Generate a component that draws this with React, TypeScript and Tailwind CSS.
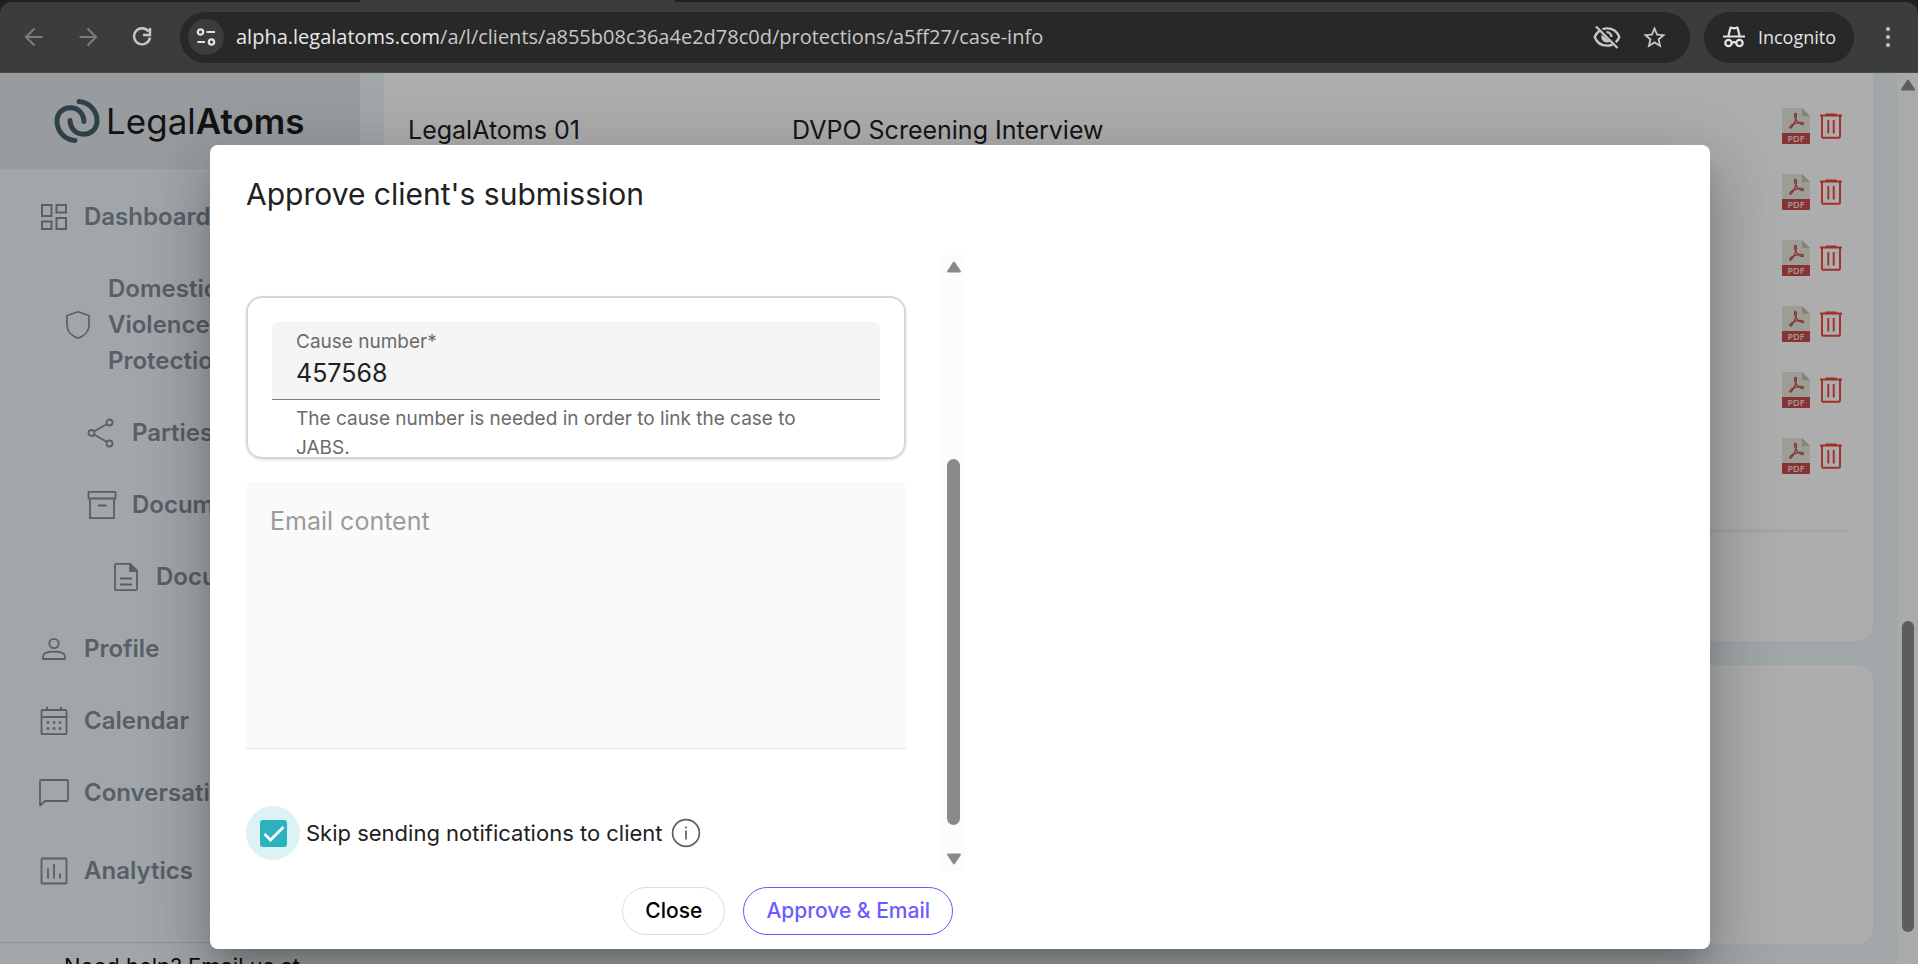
import React from "react";

type IconProps = { className?: string };

const DashboardIcon = () => (
  <svg viewBox="0 0 30 30" className="size-[30px]" fill="none" stroke="currentColor" strokeWidth="2">
    <path d="M3 3h9.500v11H3zM17.500 3H27v7.500h-9.500zM3 19.500h9.500V27H3zM17.500 16H27v11h-9.500z" />
  </svg>
);
const ShieldIcon = () => (
  <svg viewBox="0 0 30 30" className="size-[30px]" fill="none" stroke="currentColor" strokeWidth="1.700">
    <path d="M15 1.800 26 5.500v9.500c0 6-4.500 11-11 13.300C8.500 26 4 21 4 15V5.500z" />
  </svg>
);
const ShareIcon = () => (
  <svg viewBox="0 0 30 30" className="size-[30px]" fill="none" stroke="currentColor" strokeWidth="1.800">
    <circle cx="4.500" cy="15" r="3" />
    <circle cx="22.500" cy="4.500" r="3" />
    <circle cx="22.500" cy="25.500" r="3" />
    <path d="m7 13.500 13-7.500M7 16.500 20 24" />
  </svg>
);
const ArchiveIcon = () => (
  <svg viewBox="0 0 30 30" className="size-[30px]" fill="none" stroke="currentColor" strokeWidth="1.800" strokeLinejoin="round">
    <path d="M1.500 1.800h27v6.700h-27zM3 8.500h24v19.700H3zM11 15.500h8.500" />
  </svg>
);
const FileIcon = () => (
  <svg viewBox="0 0 30 30" className="size-[30px]" fill="none" stroke="currentColor" strokeWidth="1.800" strokeLinejoin="round">
    <path d="M4 3a1.200 1.200 0 0 1 1.200-1.200H19L26 9v18a1.200 1.200 0 0 1-1.200 1.200H5.200A1.200 1.200 0 0 1 4 27zM9 16.500h12M9 22.500h12" />
    <path d="M19 1.800V9h7z" fill="currentColor" />
  </svg>
);
const ProfileIcon = () => (
  <svg viewBox="0 0 30 30" className="size-[30px]" fill="none" stroke="currentColor" strokeWidth="1.800">
    <circle cx="15" cy="9.500" r="4.700" />
    <path d="M4 25v-2.500c0-3 4.500-4.800 11-4.800s11 1.800 11 4.800V25z" strokeLinejoin="round" />
  </svg>
);
const CalendarIcon = () => (
  <svg viewBox="0 0 30 30" className="size-[30px]" fill="none" stroke="currentColor" strokeWidth="1.800">
    <rect x="2.500" y="4" width="25" height="24.200" rx="1" />
    <path d="M2.500 11h25M8 4V.8M22 4V.8" />
    <path d="M7.700 16.500h2.600M13.700 16.500h2.600M19.700 16.500h2.600M7.700 22.500h2.600M13.700 22.500h2.600M19.700 22.500h2.600" strokeWidth="2.600" />
  </svg>
);
const ChatIcon = () => (
  <svg viewBox="0 0 30 30" className="size-[30px]" fill="none" stroke="currentColor" strokeWidth="1.800" strokeLinejoin="round">
    <path d="M1 27.500V3.200A1.200 1.200 0 0 1 2.200 2h25.600A1.200 1.200 0 0 1 29 3.200v18.600a1.200 1.200 0 0 1-1.200 1.200H6z" />
  </svg>
);
const ChartIcon = () => (
  <svg viewBox="0 0 30 30" className="size-[30px]" fill="none" stroke="currentColor" strokeWidth="1.800">
    <rect x="2.500" y="2.500" width="25" height="25" rx="1" />
    <path d="M9 12.500V22.500M15 8v14.500M21 17.500v5" />
  </svg>
);

const LogoMark = () => (
  <svg viewBox="0 0 46 44" className="h-11 w-[46px]" fill="none" stroke="#45606b" strokeWidth="5" strokeLinecap="round">
    <path d="M25 2.600C36 3.500 43 12 43 22c0 8-6 13.200-13.500 13.200S16.500 30 16 21.500" />
    <path d="M21 41.400C10 40.500 3 32 3 22 3 14 9 8.800 16.500 8.800S29.500 14 30 22.500" />
  </svg>
);

const PdfIcon = () => (
  <svg viewBox="0 0 28 36" className="h-9 w-7" role="img" aria-label="PDF">
    <path d="M1 0h19l8 8v18H0V1a1 1 0 0 1 1-1z" fill="#e6e7dc" />
    <path d="M20 0l8 8h-8z" fill="#c3c3b4" />
    <path d="M0 25h28v10a1 1 0 0 1-1 1H1a1 1 0 0 1-1-1z" fill="#c84a4c" />
    <path d="M13.500 5.500c-1.400 0-1 3.200 0 5 1.200 2.500 3.500 5 6 5.800 2.400.6 2.600-1.300.5-1.700-2.600-.4-6 .4-8.500 1.500-2 .9-3.800 2.700-3.500 3.700.5 1.200 2.300-.8 3.500-3.300 1.200-2.400 2.700-6.200 2.900-8.500.1-1.600-.3-2.500-.9-2.500z" fill="none" stroke="#c84a4c" strokeWidth="1.300" />
    <text x="14" y="33.500" textAnchor="middle" fontFamily="Open Sans, sans-serif" fontSize="9" fontWeight="600" fill="#f2e3e3">PDF</text>
  </svg>
);

const TrashIcon = () => (
  <svg viewBox="0 0 24 28" className="h-7 w-6" fill="none" stroke="#f04438" strokeWidth="1.900">
    <path d="M1 3.500h22M6.500 2.500h11M3 3.500v20.700c0 1 .6 1.600 1.600 1.600h14.800c1 0 1.600-.6 1.600-1.600V3.500M9.300 8v13.500M14.700 8v13.500" />
  </svg>
);

const IncognitoIcon = () => (
  <svg viewBox="0 0 24 22" className="h-[22px] w-6" fill="none" stroke="#e3e3e3" strokeWidth="2.200">
    <path d="M6.500 9.500 8.300 2.200c.1-.6.6-.8 1.100-.6l2.600.8 2.600-.8c.5-.2 1 0 1.100.6l1.800 7.300M1 10.500h22" />
    <circle cx="6.500" cy="17" r="3.200" />
    <circle cx="17.500" cy="17" r="3.200" />
    <path d="M9.700 17c1.200-1 3.400-1 4.600 0" />
  </svg>
);

const EyeOffIcon = () => (
  <svg viewBox="0 0 28 24" className="h-6 w-7" fill="none" stroke="#c7c7c7" strokeWidth="2.300">
    <path d="M9.500 4.200A13 13 0 0 1 14 3.300c5.700 0 10.300 3.500 12.300 8.700a13 13 0 0 1-3.600 5.200M6.500 5.700A14 14 0 0 0 1.700 12c2 5.200 6.600 8.700 12.300 8.700 2 0 3.800-.4 5.400-1.100M3 1.500l21.500 21.500" />
    <path d="M8.700 9.800c-1.500 3.900 1.300 7.700 5.300 7.700 1.400 0 2.300-.4 3.200-.9z" fill="#c7c7c7" stroke="none" />
    <path d="M13.500 7.200a4.800 4.800 0 0 1 5 4.800" />
  </svg>
);

const StarIcon = () => (
  <svg viewBox="0 0 24 24" className="size-[27px]" fill="#c7c7c7">
    <path d="m22 9.240-7.190-.62L12 2 9.190 8.630 2 9.240l5.460 4.730L5.820 21 12 17.270 18.180 21l-1.630-7.030zM12 15.400l-3.760 2.270 1-4.280-3.320-2.880 4.380-.38L12 6.100l1.710 4.040 4.380.38-3.320 2.880 1 4.280z" />
  </svg>
);

const TuneIcon = () => (
  <svg viewBox="0 0 20 18" className="h-[18px] w-5" fill="none" stroke="#e3e3e3" strokeWidth="2.200">
    <circle cx="4.500" cy="4" r="2.700" />
    <path d="M10.500 4H19M1.500 14H9" />
    <circle cx="15.500" cy="14" r="2.700" />
  </svg>
);

const Arrow = ({ className = "" }: IconProps) => (
  <svg viewBox="0 0 20 20" className={`size-5 ${className}`} fill="none" stroke="#7b7b7b" strokeWidth="2.200">
    <path d="M18.500 10H2.500M10.500 1.500 2 10l8.500 8.500" />
  </svg>
);

const ReloadIcon = () => (
  <svg viewBox="0 0 20 20" className="size-5" fill="none" stroke="#c7c7c7" strokeWidth="2.400">
    <path d="M16.500 4.500A8 8 0 1 0 18 10.500M18 1v7h-7" />
  </svg>
);

const Triangle = ({ className = "" }: IconProps) => (
  <svg viewBox="0 0 16 12" className={`h-3 w-4 shrink-0 ${className}`} fill="#8a8a8a" stroke="#8a8a8a" strokeWidth="2" strokeLinejoin="round">
    <path d="M8 1.500 14 10.500H2z" />
  </svg>
);

const BrowserBar = () => (
  <header className="shrink-0 border-b border-[#4a4a48] bg-[#1f2020] font-['Open_Sans',sans-serif]">
    <div className="ml-[360px] h-[2px] w-[315px] bg-[#3c3c3c]" />
    <div className="flex h-[70px] items-center rounded-t-xl bg-[#3c3c3c] pr-6">
      <div className="flex w-[180px] items-center gap-[34px] pl-6">
        <button aria-label="Back"><Arrow /></button>
        <button aria-label="Forward"><Arrow className="rotate-180" /></button>
        <button aria-label="Reload"><ReloadIcon /></button>
      </div>
      <div className="flex h-[51px] min-w-0 flex-1 items-center rounded-full bg-[#282828] pr-[22px] pl-2">
        <button aria-label="View site information" className="flex size-9 shrink-0 items-center justify-center rounded-full bg-[#3c3c3c]">
          <TuneIcon />
        </button>
        <p className="min-w-0 flex-1 truncate pl-3 text-xl leading-8 text-[#c7c7c7]">
          <span className="text-[#e8e8e8]">alpha.legalatoms.com</span>/a/l/clients/a855b08c36a4e2d78c0d/protections/a5ff27/case-info
        </p>
        <div className="flex items-center gap-5">
          <button aria-label="Third-party cookies blocked"><EyeOffIcon /></button>
          <button aria-label="Bookmark this tab"><StarIcon /></button>
        </div>
      </div>
      <button className="ml-3.5 flex h-[51px] items-center gap-3 rounded-full bg-[#282828] px-[18px] text-[18px] text-[#e3e3e3]">
        <IncognitoIcon />
        Incognito
      </button>
      <button aria-label="Menu" className="ml-7 flex w-3 flex-col items-center gap-1">
        <span className="size-1 rounded-full bg-[#c7c7c7]" />
        <span className="size-1 rounded-full bg-[#c7c7c7]" />
        <span className="size-1 rounded-full bg-[#c7c7c7]" />
      </button>
    </div>
  </header>
);

const navItems = [
  { label: "Dashboard", Icon: DashboardIcon, cls: "h-[72px] pl-[39px]" },
  { label: "Domestic Violence Protection", Icon: ShieldIcon, cls: "h-36 pl-[63px]" },
  { label: "Parties", Icon: ShareIcon, cls: "h-[72px] pl-[87px]" },
  { label: "Documents", Icon: ArchiveIcon, cls: "h-[72px] pl-[87px]" },
  { label: "Documents", Icon: FileIcon, cls: "h-[72px] pl-[111px]" },
  { label: "Profile", Icon: ProfileIcon, cls: "h-[72px] pl-[39px]" },
  { label: "Calendar", Icon: CalendarIcon, cls: "h-[72px] pl-[39px]" },
  { label: "Conversations", Icon: ChatIcon, cls: "h-[72px] pl-[39px]" },
  { label: "Analytics", Icon: ChartIcon, cls: "h-[84px] pl-[39px]" },
];

const Sidebar = () => (
  <aside className="flex w-[360px] shrink-0 flex-col">
    <div className="flex h-24 shrink-0 items-center gap-1.5 bg-[#e0e6ea] pl-[54px]">
      <LogoMark />
      <span className="text-[35px] leading-10 text-[#1c1c1c]">
        Legal<span className="font-semibold">Atoms</span>
      </span>
    </div>
    <nav className="flex shrink-0 flex-col pt-3 pb-[29px]">
      {navItems.map(({ label, Icon, cls }, i) => (
        <a key={i} href="#" className={`flex items-center gap-[15px] text-2xl leading-9 font-semibold text-[#828c9a] ${cls}`}>
          <Icon />
          <span className="w-36">{label}</span>
        </a>
      ))}
    </nav>
    <div className="border-t border-[#d3d8dc] pt-[7px] pl-16 text-[22px] leading-8 text-[#111]">Need help? Email us at</div>
  </aside>
);

const rows = [
  { client: "LegalAtoms 01", document: "DVPO Screening Interview" },
  { client: "", document: "" },
  { client: "", document: "" },
  { client: "", document: "" },
  { client: "", document: "" },
  { client: "", document: "" },
];

const Content = () => (
  <main className="flex min-w-0 flex-1 flex-col gap-6 px-6">
    <section className="h-[568px] shrink-0 rounded-b-2xl bg-white px-6 pt-5">
      <table className="w-full text-left text-[25px] text-[#222]">
        <tbody>
          {rows.map((r, i) => (
            <tr key={i} className="h-[66px]">
              <td className="w-[384px] pt-2.5">{r.client}</td>
              <td className="pt-2.5">{r.document}</td>
              <td className="pr-1.5">
                <div className="flex items-center justify-end gap-[9px]">
                  <button aria-label="Open PDF"><PdfIcon /></button>
                  <button aria-label="Delete document"><TrashIcon /></button>
                </div>
              </td>
            </tr>
          ))}
        </tbody>
      </table>
      <hr className="mt-10 border-t-3 border-[#f2f2f2]" />
    </section>
    <section className="h-[279px] shrink-0 rounded-2xl bg-white" />
  </main>
);

const PageScrollbar = () => (
  <div className="flex w-[21px] shrink-0 flex-col items-center bg-[#fbfbfb] pt-1.5">
    <Triangle />
    <div className="mt-[530px] h-[311px] w-3 rounded-full bg-[#8a8a8a]" />
  </div>
);

const ApproveDialog = () => (
  <div
    role="dialog"
    aria-modal="true"
    aria-labelledby="dialog-title"
    className="flex w-full max-w-[1500px] flex-col rounded-lg bg-white text-[#212121] shadow-[0_16px_22px_-10px_rgba(0,0,0,0.2),0_36px_57px_4px_rgba(0,0,0,0.14),0_14px_69px_12px_rgba(0,0,0,0.12)]"
  >
    <h1 id="dialog-title" className="px-9 pt-[29px] pb-[41px] text-[30px] leading-10">
      Approve client's submission
    </h1>
    <form className="flex w-[755px] flex-col" onSubmit={(e) => e.preventDefault()}>
      <div className="flex h-[616px]">
        <div className="flex min-w-0 flex-1 flex-col px-9 pt-[41px]">
          <div className="h-[163px] shrink-0 rounded-2xl border-2 border-[#d6d6d6] px-6 pt-6 shadow-sm">
            <div className="flex h-[78px] flex-col rounded-t-md border-b border-[#808080] bg-[#f5f5f5] px-6 pt-1">
              <label htmlFor="cause-number" className="text-[19px] leading-8 text-[#6b6b6b]">
                Cause number*
              </label>
              <input id="cause-number" defaultValue="457568" aria-describedby="cause-help" className="h-[30px] w-full bg-transparent text-[25px] leading-[30px] outline-none" />
            </div>
            <p id="cause-help" className="w-[560px] px-6 pt-1 text-[19px] leading-[29px] text-[#6b6b6b]">
              The cause number is needed in order to link the case to JABS.
            </p>
          </div>
          <textarea
            aria-label="Email content"
            placeholder="Email content"
            className="mt-[23px] h-[267px] shrink-0 resize-none rounded-t-md border-b border-[#e4e4e4] bg-[#fafafa] px-6 py-[21px] text-[25px] leading-9 outline-none placeholder:text-[#9b9b9b]"
          />
          <div className="mt-[57px] flex items-center">
            <span className="flex size-[54px] items-center justify-center rounded-full bg-[#dcf2f5]">
              <span className="grid size-[27px]">
                <input
                  id="skip-notify"
                  type="checkbox"
                  defaultChecked
                  className="col-start-1 row-start-1 size-[27px] appearance-none rounded-[3px] border-2 border-[#757575] checked:border-[#2cb1bf] checked:bg-[#2cb1bf]"
                />
                <svg viewBox="0 0 27 27" className="pointer-events-none col-start-1 row-start-1 size-[27px]" fill="none" stroke="#fff" strokeWidth="2.800">
                  <path d="m4.500 14 6 6L23.500 7" />
                </svg>
              </span>
            </span>
            <label htmlFor="skip-notify" className="pl-1.5 text-[22px] leading-8">
              Skip sending notifications to client
            </label>
            <button type="button" aria-label="More information" className="ml-2">
              <svg viewBox="0 0 30 30" className="size-[30px]" fill="none" stroke="#5f5f5f" strokeWidth="1.700">
                <circle cx="15" cy="15" r="13.400" />
                <path d="M15 12.500v9M15 8.500v2" />
              </svg>
            </button>
          </div>
        </div>
        <div className="flex w-[23px] flex-col items-center bg-[#fcfcfc] py-1.5">
          <Triangle />
          <div className="mt-[186px] h-[366px] w-[13px] rounded-full bg-[#8a8a8a]" />
          <Triangle className="mt-auto rotate-180" />
        </div>
      </div>
      <div className="flex justify-end gap-[18px] pt-4 pr-3 pb-3.5">
        <button type="button" className="h-12 rounded-full border border-[#dcdcdc] px-[22px] text-[21px] font-medium text-black">
          Close
        </button>
        <button type="submit" className="h-12 rounded-full border border-[#6558f5] px-[22px] text-[21px] font-medium text-[#6a5cff]">
          Approve &amp; Email
        </button>
      </div>
    </form>
  </div>
);

export default function App() {
  return (
    <div className="flex h-screen flex-col overflow-hidden font-['Inter',sans-serif]">
      <BrowserBar />
      <div className="relative flex min-h-0 flex-1 overflow-hidden bg-[#eef5f9]">
        <Sidebar />
        <Content />
        <PageScrollbar />
        <div className="absolute inset-0 flex items-start justify-center bg-black/32 pt-[72px] pr-4 pl-[18px]">
          <ApproveDialog />
        </div>
      </div>
    </div>
  );
}
